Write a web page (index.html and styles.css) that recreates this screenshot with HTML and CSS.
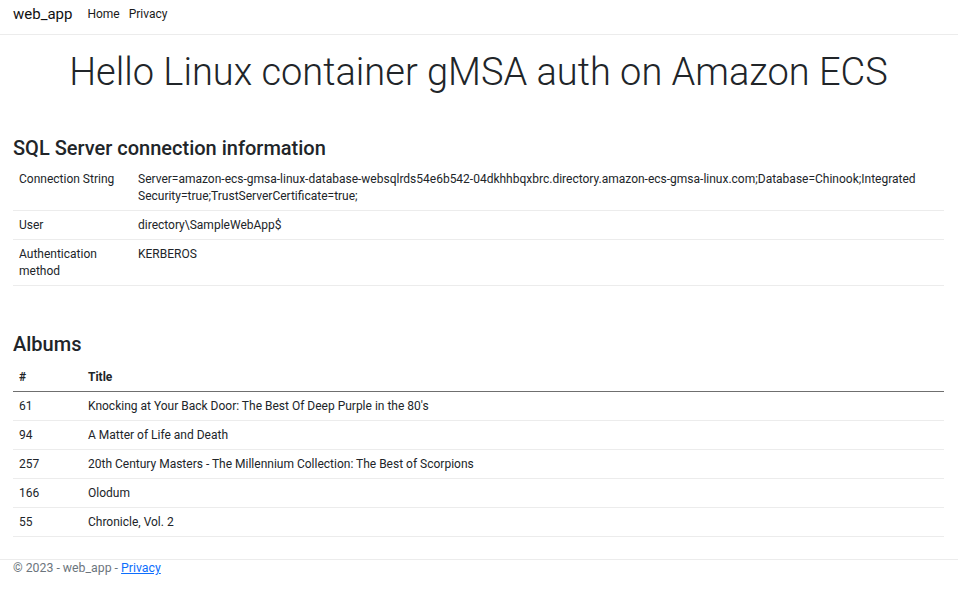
FILE: index.html
```html
<!DOCTYPE html>
<html lang="en">
<head>
<meta charset="utf-8">
<title>web_app</title>
<link rel="stylesheet" href="styles.css">
</head>
<body>
<header class="navbar">
  <a class="brand" href="#">web_app</a>
  <nav class="nav">
    <a href="#">Home</a>
    <a href="#">Privacy</a>
  </nav>
</header>
<main class="container">
  <h1 class="display">Hello Linux container gMSA auth on Amazon ECS</h1>
  <h2 class="section-title first">SQL Server connection information</h2>
  <table class="table info">
    <tbody>
      <tr><td class="c1">Connection String</td><td>Server=amazon-ecs-gmsa-linux-database-websqlrds54e6b542-04dkhhbqxbrc.directory.amazon-ecs-gmsa-linux.com;Database=Chinook;Integrated Security=true;TrustServerCertificate=true;</td></tr>
      <tr><td class="c1">User</td><td>directory\SampleWebApp$</td></tr>
      <tr><td class="c1">Authentication method</td><td>KERBEROS</td></tr>
    </tbody>
  </table>
  <h2 class="section-title second">Albums</h2>
  <table class="table albums">
    <thead>
      <tr><th class="c1">#</th><th>Title</th></tr>
    </thead>
    <tbody>
      <tr><td>61</td><td>Knocking at Your Back Door: The Best Of Deep Purple in the 80's</td></tr>
      <tr><td>94</td><td>A Matter of Life and Death</td></tr>
      <tr><td>257</td><td>20th Century Masters - The Millennium Collection: The Best of Scorpions</td></tr>
      <tr><td>166</td><td>Olodum</td></tr>
      <tr><td>55</td><td>Chronicle, Vol. 2</td></tr>
    </tbody>
  </table>
</main>
<footer class="footer">
  <div class="footer-inner">&copy; 2023 - web_app - <a href="#">Privacy</a></div>
</footer>
</body>
</html>
```
FILE: styles.css
```css
* { box-sizing: border-box; }
html, body { margin: 0; padding: 0; }
body {
  font-family: Roboto, "Liberation Sans", sans-serif;
  font-size: 12px;
  line-height: 17px;
  color: #212529;
  background: #fff;
}
a { color: inherit; text-decoration: none; }
.navbar {
  display: flex;
  align-items: flex-start;
  height: 35px;
  padding: 5px 13px 0;
  border-bottom: 1px solid #ececec;
}
.brand {
  font-size: 15px;
  line-height: 18px;
  margin-right: 15px;
  color: #111;
}
.nav { display: flex; gap: 9px; }
.nav a { font-size: 12px; line-height: 18px; color: #1a1a1a; }
.container { padding: 0 14px 0 13px; }
.display {
  font-weight: 300;
  font-size: 38px;
  line-height: 48px;
  text-align: center;
  margin: 13px 0 0;
}
.section-title {
  font-size: 20px;
  font-weight: 500;
  line-height: 24px;
  margin: 0;
}
.section-title.first { margin-top: 40px; margin-bottom: 5px; }
.section-title.second { margin-top: 46px; margin-bottom: 7px; }
.table {
  width: 100%;
  border-collapse: collapse;
}
.table td, .table th {
  padding: 5.5px 6px;
  text-align: left;
  vertical-align: top;
  border-bottom: 1px solid #ececec;
}
.table th { font-weight: 700; }
.info .c1 { width: 119px; }
.albums .c1 { width: 69px; }
.albums thead th { border-bottom: 1px solid #6f6f6f; }
.footer {
  margin-top: 22px;
  border-top: 1px solid #ececec;
}
.footer-inner {
  padding: 0 13px;
  font-size: 12.3px;
  color: #6c757d;
}
.footer a { color: #0d6efd; text-decoration: underline; }
```
